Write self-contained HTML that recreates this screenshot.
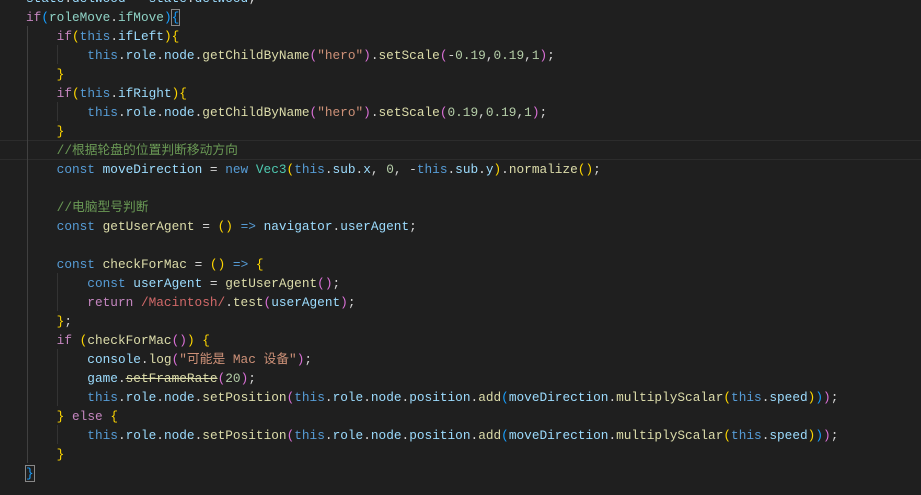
<!DOCTYPE html>
<html><head><meta charset="utf-8"><style>
body{margin:0;width:921px;height:495px;background:#1f1f1f;overflow:hidden;position:relative}
.code{position:absolute;left:26px;top:-11px;font-family:"Liberation Mono","Noto Sans CJK SC",monospace;font-size:0;line-height:0;color:#d4d4d4}
.l{height:19px;font-size:12.77px;line-height:19px;white-space:pre}
.k{color:#c586c0}.b{color:#569cd6}.v{color:#9cdcfe}.f{color:#dcdcaa}.s{color:#ce9178}.n{color:#b5cea8}.c{color:#6a9955}.t{color:#4ec9b0}.r{color:#d16969}
.y{color:#ffd700}.p{color:#da70d6}.q{color:#179fff}.rv{color:#8fd3c6}
.g{position:absolute;width:1px;background:#404040}
.hl{position:absolute;left:0;width:921px;top:140px;height:18px;border-top:1px solid #2c2c2c;border-bottom:1px solid #2c2c2c}
.box{outline:1px solid #888}
</style></head><body>
<div class="hl"></div>
<div class="g" style="left:27px;top:26px;height:437px"></div>
<div class="g" style="left:57px;top:45px;height:19px;background:#333"></div>
<div class="g" style="left:57px;top:102px;height:19px;background:#333"></div>
<div class="g" style="left:57px;top:273px;height:38px;background:#333"></div>
<div class="g" style="left:57px;top:349px;height:57px;background:#333"></div>
<div class="g" style="left:57px;top:425px;height:19px;background:#333"></div>
<div class="code">
<div class="l"><span class="v">state</span>.<span class="v">delWood</span> = <span class="v">state</span>.<span class="v">delWood</span>;</div>
<div class="l"><span class="k">if</span><span class="q">(</span><span class="rv">roleMove</span>.<span class="rv">ifMove</span><span class="q">)</span><span class="q box">{</span></div>
<div class="l">    <span class="k">if</span><span class="y">(</span><span class="b">this</span>.<span class="v">ifLeft</span><span class="y">){</span></div>
<div class="l">        <span class="b">this</span>.<span class="v">role</span>.<span class="v">node</span>.<span class="f">getChildByName</span><span class="p">(</span><span class="s">"hero"</span><span class="p">)</span>.<span class="f">setScale</span><span class="p">(</span>-<span class="n">0.19</span>,<span class="n">0.19</span>,<span class="n">1</span><span class="p">)</span>;</div>
<div class="l">    <span class="y">}</span></div>
<div class="l">    <span class="k">if</span><span class="y">(</span><span class="b">this</span>.<span class="v">ifRight</span><span class="y">){</span></div>
<div class="l">        <span class="b">this</span>.<span class="v">role</span>.<span class="v">node</span>.<span class="f">getChildByName</span><span class="p">(</span><span class="s">"hero"</span><span class="p">)</span>.<span class="f">setScale</span><span class="p">(</span><span class="n">0.19</span>,<span class="n">0.19</span>,<span class="n">1</span><span class="p">)</span>;</div>
<div class="l">    <span class="y">}</span></div>
<div class="l">    <span class="c">//根据轮盘的位置判断移动方向</span></div>
<div class="l">    <span class="b">const</span> <span class="v">moveDirection</span> = <span class="b">new</span> <span class="t">Vec3</span><span class="y">(</span><span class="b">this</span>.<span class="v">sub</span>.<span class="v">x</span>, <span class="n">0</span>, -<span class="b">this</span>.<span class="v">sub</span>.<span class="v">y</span><span class="y">)</span>.<span class="f">normalize</span><span class="y">()</span>;</div>
<div class="l"></div>
<div class="l">    <span class="c">//电脑型号判断</span></div>
<div class="l">    <span class="b">const</span> <span class="f">getUserAgent</span> = <span class="y">()</span> <span class="b">=&gt;</span> <span class="v">navigator</span>.<span class="v">userAgent</span>;</div>
<div class="l"></div>
<div class="l">    <span class="b">const</span> <span class="f">checkForMac</span> = <span class="y">()</span> <span class="b">=&gt;</span> <span class="y">{</span></div>
<div class="l">        <span class="b">const</span> <span class="v">userAgent</span> = <span class="f">getUserAgent</span><span class="p">()</span>;</div>
<div class="l">        <span class="k">return</span> <span class="r">/Macintosh/</span>.<span class="f">test</span><span class="p">(</span><span class="v">userAgent</span><span class="p">)</span>;</div>
<div class="l">    <span class="y">}</span>;</div>
<div class="l">    <span class="k">if</span> <span class="y">(</span><span class="f">checkForMac</span><span class="p">()</span><span class="y">)</span> <span class="y">{</span></div>
<div class="l">        <span class="v">console</span>.<span class="f">log</span><span class="p">(</span><span class="s">"可能是 Mac 设备"</span><span class="p">)</span>;</div>
<div class="l">        <span class="v">game</span>.<span class="f" style="text-decoration:line-through">setFrameRate</span><span class="p">(</span><span class="n">20</span><span class="p">)</span>;</div>
<div class="l">        <span class="b">this</span>.<span class="v">role</span>.<span class="v">node</span>.<span class="f">setPosition</span><span class="p">(</span><span class="b">this</span>.<span class="v">role</span>.<span class="v">node</span>.<span class="v">position</span>.<span class="f">add</span><span class="q">(</span><span class="v">moveDirection</span>.<span class="f">multiplyScalar</span><span class="y">(</span><span class="b">this</span>.<span class="v">speed</span><span class="y">)</span><span class="q">)</span><span class="p">)</span>;</div>
<div class="l">    <span class="y">}</span> <span class="k">else</span> <span class="y">{</span></div>
<div class="l">        <span class="b">this</span>.<span class="v">role</span>.<span class="v">node</span>.<span class="f">setPosition</span><span class="p">(</span><span class="b">this</span>.<span class="v">role</span>.<span class="v">node</span>.<span class="v">position</span>.<span class="f">add</span><span class="q">(</span><span class="v">moveDirection</span>.<span class="f">multiplyScalar</span><span class="y">(</span><span class="b">this</span>.<span class="v">speed</span><span class="y">)</span><span class="q">)</span><span class="p">)</span>;</div>
<div class="l">    <span class="y">}</span></div>
<div class="l"><span class="q box">}</span></div>
</div>
</body></html>
